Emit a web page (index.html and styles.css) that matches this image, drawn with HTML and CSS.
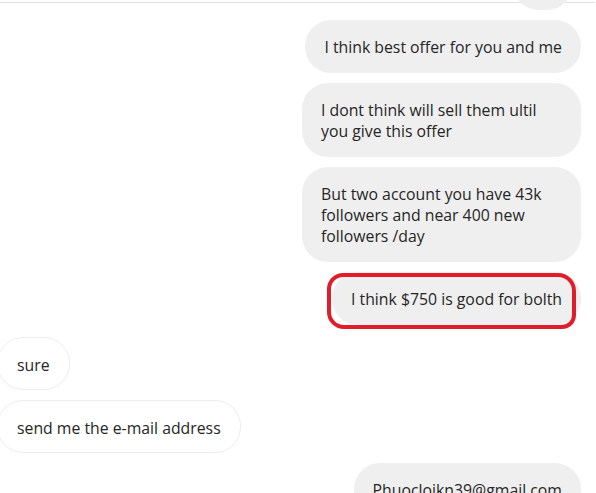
FILE: index.html
```html
<!DOCTYPE html>
<html>
<head>
<meta charset="utf-8">
<link rel="stylesheet" href="styles.css">
</head>
<body>
<div class="top-line"></div>
<div class="chat">
  <div class="msg mine first"><span class="ghost">ok</span></div>
  <div class="msg mine">I think best offer for you and me</div>
  <div class="msg mine wide">I dont think will sell them ultil<br>you give this offer</div>
  <div class="msg mine wide">But two account you have 43k<br>followers and near 400 new<br>followers /day</div>
  <div class="msg mine marked">I think $750 is good for bolth<span class="ring"></span></div>
  <div class="msg theirs after-mine">sure</div>
  <div class="msg theirs">send me the e-mail address</div>
  <div class="msg mine last">Phuocloikn39@gmail.com</div>
</div>
</body>
</html>
```
FILE: styles.css
```css
html, body {
  margin: 0;
  padding: 0;
  background: #fff;
  height: 100%;
  overflow: hidden;
}
body {
  font-family: "Open Sans", "Noto Sans", sans-serif;
  font-size: 15.8px;
  color: #262626;
}
.top-line {
  height: 2px;
  width: 595px;
  border-bottom: 1px solid #e0e0e0;
}
.chat {
  display: flex;
  flex-direction: column;
  align-items: flex-end;
  gap: 10px;
  padding-right: 15px;
}
.msg {
  box-sizing: border-box;
  padding: 17px 19px 15px 19px;
  line-height: 21px;
  border-radius: 26px;
  white-space: nowrap;
  position: relative;
}
.mine {
  background: #efefef;
}
.wide {
  width: 279px;
}
.theirs {
  align-self: flex-start;
  margin-left: -3px;
  background: #fff;
  border: 1px solid #ededed;
  padding: 17px 19px 13px 19px;
}
.after-mine {
  margin-top: 2px;
}
.first {
  margin-top: -46px;
  margin-right: 8px;
  width: 60px;
}
.ghost {
  visibility: hidden;
}
.ring {
  position: absolute;
  left: -5px;
  top: 1px;
  right: 5px;
  bottom: -4px;
  border: 4px solid #e11d2a;
  border-radius: 16px 18px 14px 17px;
}
```
